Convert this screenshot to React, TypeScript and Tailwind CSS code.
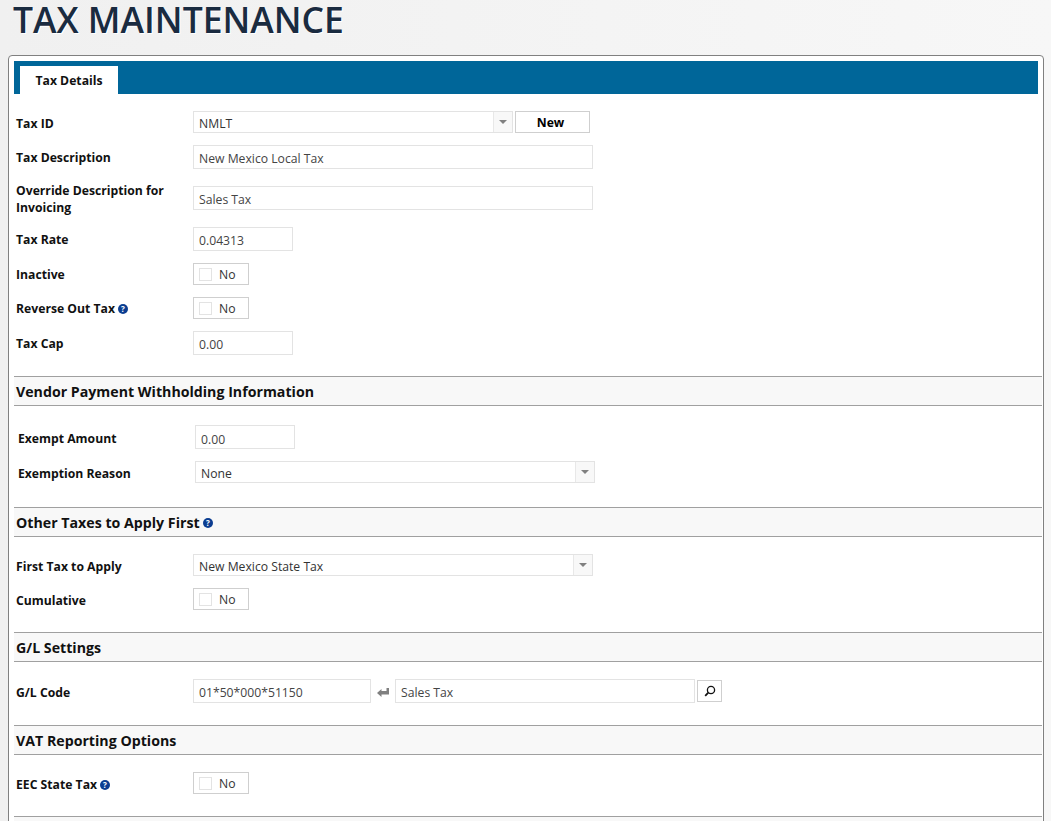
import React from "react";

const Help = () => (
  <svg width="10" height="10" viewBox="0 0 10 10" className="shrink-0">
    <circle cx="5" cy="5" r="5" fill="#0b3d91" />
    <text x="5" y="8" textAnchor="middle" fontSize="8" fontWeight="700" fill="#fff" fontFamily="'Open Sans', sans-serif">?</text>
  </svg>
);

const Label = ({ children, help, low }: { children: React.ReactNode; help?: boolean; low?: boolean }) => (
  <div className={`w-[177px] shrink-0 ${low ? "pt-[3px]" : "pt-[1px]"} text-[12.2px] leading-[17px] font-bold text-[#111] flex items-center gap-[3px]`}>
    <span>{children}</span>
    {help && <Help />}
  </div>
);

const Input = ({ value, w, low }: { value: string; w: string; low?: boolean }) => (
  <div className={`${w} h-[24px] border border-[#e3e3e3] bg-white pl-[5px] text-[12.2px] ${low ? "leading-[27px]" : "leading-[25px]"} text-[#444]`}>{value}</div>
);

const W400 = "w-[400px]";

const Select = ({ value, w }: { value: string; w: string }) => (
  <div className={`${w} h-[22px] border border-[#e3e3e3] bg-white flex items-center text-[12.2px] text-[#333]`}>
    <span className="flex-1 pl-[5px] pt-[4px]">{value}</span>
    <span className="w-[19px] h-full border-l border-[#e8e8e8] bg-[#f8f8f8] flex items-center justify-center">
      <span className="w-0 h-0 border-x-[4px] border-x-transparent border-t-[4px] border-t-[#808080]" />
    </span>
  </div>
);

const Toggle = () => (
  <div className="w-[56px] h-[22px] border border-[#cfcfcf] bg-white flex items-center pl-[5px] gap-[7px] text-[12.2px] text-[#333]">
    <span className="w-[13px] h-[13px] border border-[#e3e3e3]" />
    <span className="pt-[3px]">No</span>
  </div>
);

const Section = ({ children, help }: { children: React.ReactNode; help?: boolean }) => (
  <div className="h-[30px] -mr-[4px] border-y border-[#a0a0a0] bg-[#f8f8f8] flex items-center pl-[2px] pt-[2px] gap-[3px] text-[14.2px] font-bold text-[#111]">
    <span>{children}</span>
    {help && <Help />}
  </div>
);

const Row = ({ children, className = "" }: { children: React.ReactNode; className?: string }) => (
  <div className={`flex items-center ${className}`}>{children}</div>
);

export default function App() {
  return (
    <div className="h-screen overflow-hidden bg-gradient-to-r from-[#f0f0f0] to-[#f7f7f7] font-['Open_Sans',sans-serif] pl-[8px] pr-[7px]">
      <h1 className="h-[55px] pl-[5px] text-[35.5px] leading-[39px] font-semibold text-[#1a2b40] [text-shadow:1px_1px_0_#fff]">TAX MAINTENANCE</h1>
      <div className="border border-[#808080] rounded-[4px] bg-white px-[5px] pt-[5px] h-[900px]">
        <div className="h-[33px] bg-[#006699] pl-[6px] flex items-end">
          <div className="w-[98px] h-[28px] bg-white flex items-center justify-center pt-[2px] text-[12.2px] font-bold text-[#111]">Tax Details</div>
        </div>

        <div className="pl-[2px] pt-[17px] flex flex-col gap-[12px]">
          <Row>
            <Label low>Tax ID</Label>
            <Select value="NMLT" w="w-[320px]" />
            <div className="ml-[2px] w-[75px] h-[22px] border border-[#cfcfcf] bg-white flex items-center justify-center pr-[4px] pt-[2px] text-[12.2px] font-bold text-black">New</div>
          </Row>
          <Row><Label>Tax Description</Label><Input value="New Mexico Local Tax" w={W400} /></Row>
          <Row className="h-[34px]"><Label>Override Description for Invoicing</Label><Input value="Sales Tax" w={W400} /></Row>
          <Row><Label>Tax Rate</Label><Input value="0.04313" w="w-[100px]" /></Row>
          <Row><Label>Inactive</Label><Toggle /></Row>
          <Row><Label help>Reverse Out Tax</Label><Toggle /></Row>
          <Row><Label>Tax Cap</Label><Input value="0.00" w="w-[100px]" /></Row>
        </div>

        <div className="mt-[21px]"><Section>Vendor Payment Withholding Information</Section></div>
        <div className="pl-[4px] pt-[19px] flex flex-col gap-[12px]">
          <Row><Label low>Exempt Amount</Label><Input low value="0.00" w="w-[100px]" /></Row>
          <Row><Label low>Exemption Reason</Label><Select value="None" w={W400} /></Row>
        </div>

        <div className="mt-[24px]"><Section help>Other Taxes to Apply First</Section></div>
        <div className="pl-[2px] pt-[17px] flex flex-col gap-[12px]">
          <Row><Label low>First Tax to Apply</Label><Select value="New Mexico State Tax" w={W400} /></Row>
          <Row><Label low>Cumulative</Label><Toggle /></Row>
        </div>

        <div className="mt-[22px]"><Section>G/L Settings</Section></div>
        <div className="pl-[2px] pt-[17px]">
          <Row>
            <Label low>G/L Code</Label>
            <Input value="01*50*000*51150" w="w-[178px]" />
            <svg width="24" height="24" viewBox="0 0 24 24" className="shrink-0">
              <path d="M6 14 L10.5 10 V12 H15.5 V9 H18 V15.5 H10.5 V18 Z" fill="#808080" />
            </svg>
            <Input value="Sales Tax" w="w-[300px]" />
            <div className="ml-[2px] w-[25px] h-[22px] border border-[#cfcfcf] bg-white flex items-center justify-center">
              <svg width="12" height="12" viewBox="0 0 12 12" fill="none" stroke="#111">
                <circle cx="7" cy="5" r="3.6" strokeWidth="1.3" />
                <path d="M4.3 7.7 L1.2 10.8" strokeWidth="1.8" />
              </svg>
            </div>
          </Row>
        </div>

        <div className="mt-[22px]"><Section>VAT Reporting Options</Section></div>
        <div className="pl-[2px] pt-[17px]">
          <Row><Label low help>EEC State Tax</Label><Toggle /></Row>
        </div>

        <div className="mt-[22px]"><Section>{""}</Section></div>
      </div>
    </div>
  );
}
